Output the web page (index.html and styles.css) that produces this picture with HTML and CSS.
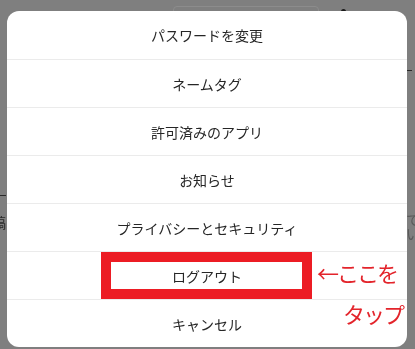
FILE: index.html
```html
<!DOCTYPE html>
<html lang="ja">
<head>
    <meta charset="UTF-8">
    <meta name="viewport" content="width=device-width, initial-scale=1.0">
    <title>設定メニュー</title>
    <link rel="stylesheet" href="styles.css">
</head>
<body>
<div class="backdrop">
    <div class="bg-search"></div>
    <div class="bg-dot"></div>
    <div class="bg-dash bg-dash-left"></div>
    <div class="bg-dash bg-dash-right"></div>
    <span class="bg-text bg-text-left">稿</span>
    <span class="bg-text bg-text-right">てい</span>
</div>

<div class="sheet">
    <div class="item">パスワードを変更</div>
    <div class="item">ネームタグ</div>
    <div class="item">許可済みのアプリ</div>
    <div class="item">お知らせ</div>
    <div class="item">プライバシーとセキュリティ</div>
    <div class="item item-logout">
        <span class="highlight"></span>
        ログアウト
        <span class="note note-arrow">←ここを</span>
        <span class="note note-tap">タップ</span>
    </div>
    <div class="item">キャンセル</div>
</div>
</body>
</html>
```

FILE: styles.css
```css
html, body {
    margin: 0;
    padding: 0;
    height: 100%;
    overflow: hidden;
}
body {
    background: #7f7f7f;
    font-family: 'Noto Sans CJK JP', 'Noto Sans', sans-serif;
    padding: 11px 8px 0 7px;
    box-sizing: border-box;
}

/* faded page behind the overlay */
.backdrop {
    position: fixed;
    inset: 0;
}
.bg-search {
    position: absolute;
    left: 173px;
    top: 6px;
    width: 144px;
    height: 20px;
    border: 1px solid #8c8c8c;
    border-radius: 4px;
}
.bg-dot {
    position: absolute;
    left: 341px;
    top: 9px;
    width: 5px;
    height: 5px;
    border-radius: 50%;
    background: #1a1a1a;
}
.bg-dash {
    position: absolute;
    height: 1px;
    background: #2a2a2a;
}
.bg-dash-left {
    left: 0;
    top: 195px;
    width: 6px;
}
.bg-dash-right {
    left: 403px;
    top: 70px;
    width: 9px;
}
.bg-text {
    position: absolute;
    font-size: 14px;
    color: #2a2a2a;
    line-height: 1;
}
.bg-text-left {
    left: -8px;
    top: 215px;
}
.bg-text-right {
    left: 406px;
    top: 212px;
    color: #5a5a5a;
}

.sheet {
    position: relative;
    width: 400px;
    background: #fff;
    border-radius: 12px;
    overflow: hidden;
}
.item {
    position: relative;
    height: 48px;
    display: flex;
    align-items: center;
    justify-content: center;
    font-size: 14px;
    color: #262626;
    border-top: 1px solid #ebebeb;
    box-sizing: border-box;
}
.item:first-child {
    border-top: none;
}

.highlight {
    position: absolute;
    left: 94px;
    top: 0;
    width: 211px;
    height: 47px;
    border: 10px solid #ec1c24;
    box-sizing: border-box;
}
.note {
    position: absolute;
    color: #e3242b;
    font-size: 22px;
    line-height: 1;
    letter-spacing: -2px;
    white-space: nowrap;
}
.note-arrow {
    left: 310px;
    top: 9px;
}
.note-tap {
    left: 336px;
    top: 50px;
}
```
